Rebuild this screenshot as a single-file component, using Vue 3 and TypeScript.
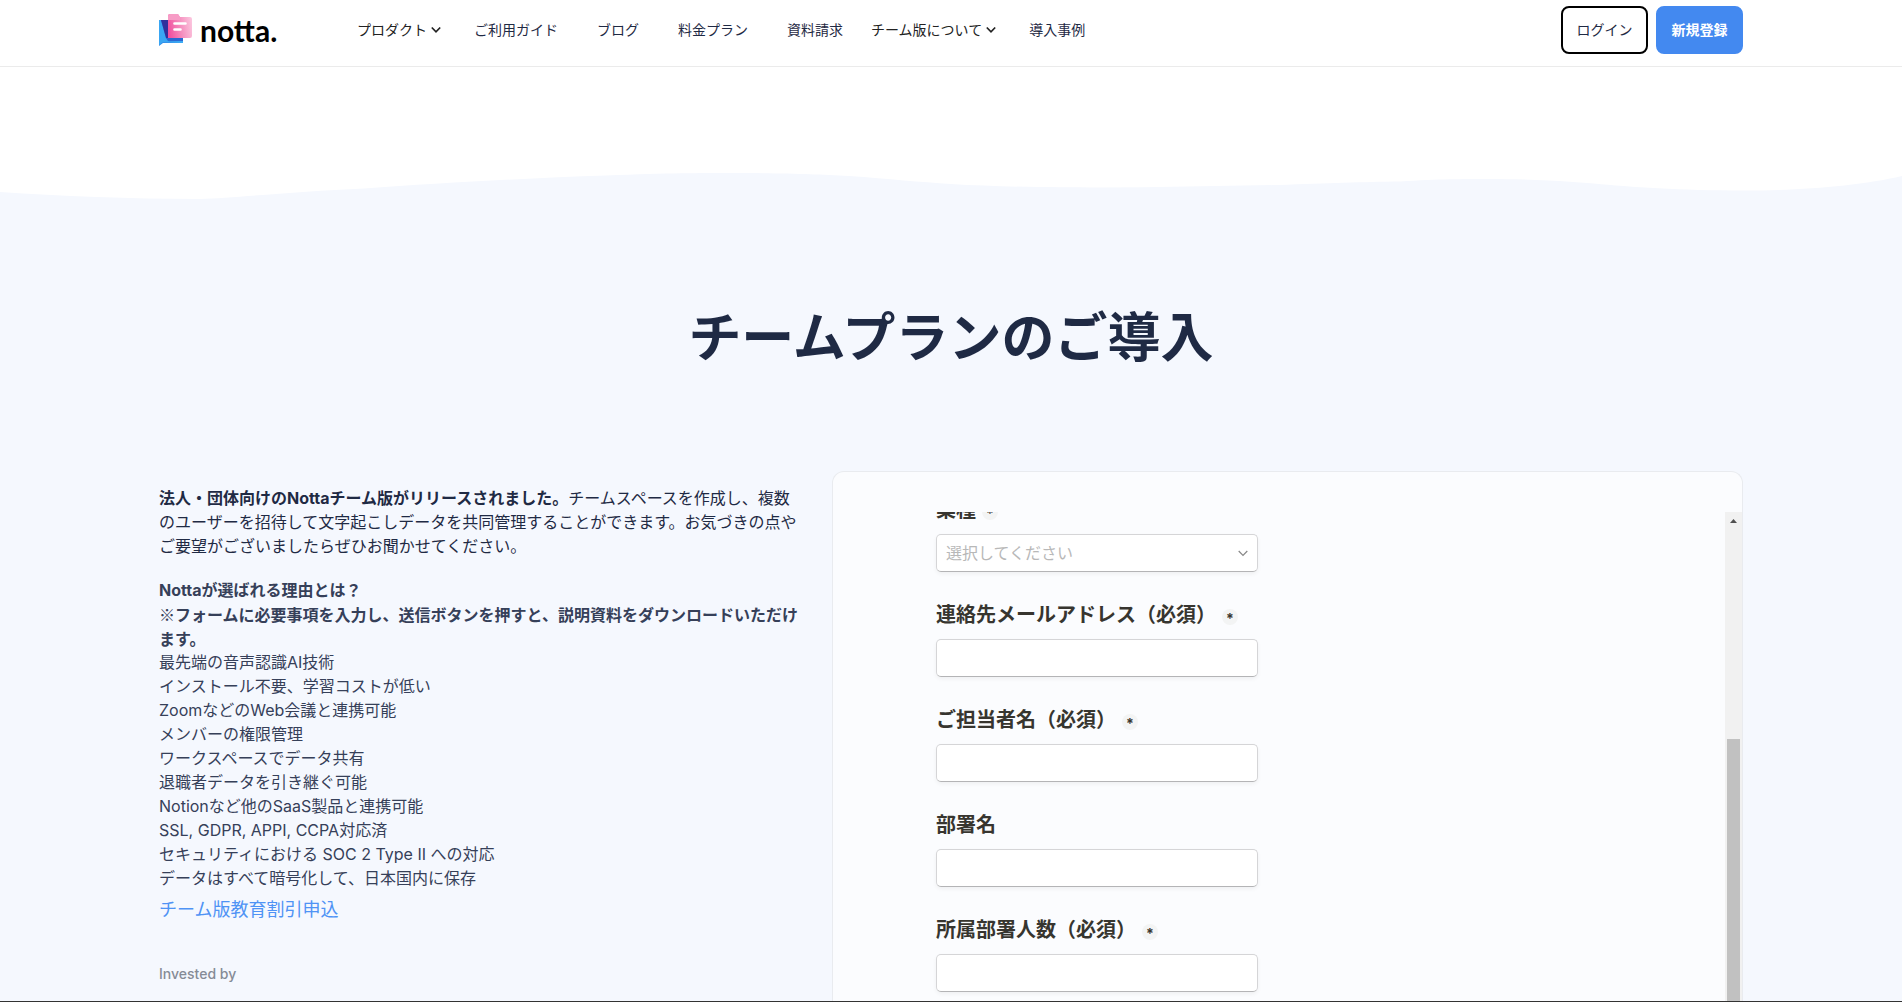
<script setup lang="ts">
import { ref } from 'vue'

interface NavItem {
  label: string
  menu?: boolean
}

interface Field {
  id: string
  label: string
  required: boolean
  kind: 'select' | 'text' | 'email'
}

const navItems: NavItem[] = [
  { label: 'プロダクト', menu: true },
  { label: 'ご利用ガイド' },
  { label: 'ブログ' },
  { label: '料金プラン' },
  { label: '資料請求' },
  { label: 'チーム版について', menu: true },
  { label: '導入事例' },
]

const reasons: string[] = [
  '最先端の音声認識AI技術',
  'インストール不要、学習コストが低い',
  'ZoomなどのWeb会議と連携可能',
  'メンバーの権限管理',
  'ワークスペースでデータ共有',
  '退職者データを引き継ぐ可能',
  'Notionなど他のSaaS製品と連携可能',
  'SSL, GDPR, APPI, CCPA対応済',
  'セキュリティにおける SOC 2 Type II への対応',
  'データはすべて暗号化して、日本国内に保存',
]

const fields: Field[] = [
  { id: 'industry', label: '業種', required: true, kind: 'select' },
  { id: 'email', label: '連絡先メールアドレス（必須）', required: true, kind: 'email' },
  { id: 'contact', label: 'ご担当者名（必須）', required: true, kind: 'text' },
  { id: 'department', label: '部署名', required: false, kind: 'text' },
  { id: 'headcount', label: '所属部署人数（必須）', required: true, kind: 'text' },
]

const values = ref<Record<string, string>>({
  industry: '',
  email: '',
  contact: '',
  department: '',
  headcount: '',
})
</script>

<template>
  <div class="page">
    <header class="header">
      <div class="container header-row">
        <a class="logo" href="#">
          <svg class="logo-mark" viewBox="0 0 33 32" aria-hidden="true">
            <defs>
              <linearGradient id="bubble" x1="0" y1="0" x2="1" y2="1">
                <stop offset="0" stop-color="#2563d8" />
                <stop offset="1" stop-color="#3fb4f7" />
              </linearGradient>
              <linearGradient id="folder" x1="0" y1="0.6" x2="1" y2="0.4">
                <stop offset="0" stop-color="#f0509f" />
                <stop offset="0.5" stop-color="#f58cbd" />
                <stop offset="1" stop-color="#fbc4dd" />
              </linearGradient>
            </defs>
            <path d="M0 6h24v23H4l-4 3z" fill="url(#bubble)" />
            <path d="M0 6h2l5 18 3 4H4l-4 3z" fill="#39a6f3" />
            <path d="M2 6h8v18H7z" fill="#30309c" />
            <path d="M7 24h17v3H9z" fill="#2a67d2" />
            <path d="M9 2q0-2 2-2h8l2 3h10q2 0 2 2v17q0 2-2 2H9z" fill="url(#folder)" />
            <path d="M9 2q0-2 2-2h8l2 3v3H9z" fill="#f79cc6" />
            <path d="M15.500 9.500h11M15.500 15.500h6" stroke="#fff" stroke-width="2.600" stroke-linecap="round" />
          </svg>
          <span class="logo-word">notta.</span>
        </a>

        <nav class="nav">
          <template v-for="item in navItems" :key="item.label">
            <button v-if="item.menu" type="button" class="nav-menu">
              {{ item.label }}
              <svg class="nav-chevron" viewBox="0 0 10 8" aria-hidden="true">
                <path d="M0.800 1.500 5 5.800 9.200 1.500" fill="none" stroke="currentColor" stroke-width="1.700" />
              </svg>
            </button>
            <a v-else class="nav-link" href="#">{{ item.label }}</a>
          </template>
        </nav>

        <div class="actions">
          <button type="button" class="btn btn-outline">ログイン</button>
          <button type="button" class="btn btn-primary">新規登録</button>
        </div>
      </div>
    </header>

    <svg class="wave" viewBox="0 0 1902 32" preserveAspectRatio="none" aria-hidden="true">
      <path
        d="M0 22C60 26 130 29 200 29C235 28 300 21 364 18.500C440 13 530 8 606 5.500C670 3 700 3 728 3C790 3 815 4 849 6C890 9 920 12 951 14C1000 17 1060 17.500 1100 17.500C1160 17.500 1220 16 1278 15C1330 13 1360 12 1400 11.500C1440 9 1460 9 1490 9C1530 9 1560 11 1594 13.500C1630 17 1680 20.500 1745 20.500C1800 20.500 1860 16 1902 6V32H0Z"
        fill="#f5f8fe"
      />
    </svg>

    <main class="main">
      <h1 class="title">チームプランのご導入</h1>
      <div class="container columns">
        <section class="intro">
          <p class="lead">
            <strong>法人・団体向けのNottaチーム版がリリースされました。</strong>チームスペースを作成し、複数のユーザーを招待して文字起こしデータを共同管理することができます。お気づきの点やご要望がございましたらぜひお聞かせてください。
          </p>
          <div class="reasons">
            <h2 class="reasons-title">Nottaが選ばれる理由とは？</h2>
            <p class="reasons-note">※フォームに必要事項を入力し、送信ボタンを押すと、説明資料をダウンロードいただけます。</p>
            <ul class="reasons-list">
              <li v-for="reason in reasons" :key="reason">{{ reason }}</li>
            </ul>
          </div>
          <a class="edu-link" href="#">チーム版教育割引申込</a>
          <p class="invested">Invested by</p>
        </section>

        <section class="card">
          <div class="viewport">
            <form class="form" @submit.prevent>
              <div v-for="field in fields" :key="field.id" class="field">
                <label class="field-label" :for="field.id">
                  {{ field.label }}
                  <span v-if="field.required" class="required">*</span>
                </label>
                <div v-if="field.kind === 'select'" class="select-wrap">
                  <select :id="field.id" v-model="values[field.id]" class="control control-select">
                    <option value="">選択してください</option>
                  </select>
                  <svg class="select-chevron" viewBox="0 0 10 7" aria-hidden="true">
                    <path d="M0.700 1 5 5.500 9.300 1" fill="none" stroke="#888" stroke-width="1.200" />
                  </svg>
                </div>
                <input v-else :id="field.id" v-model="values[field.id]" class="control" :type="field.kind" />
              </div>
            </form>
            <div class="scrollbar" aria-hidden="true">
              <svg class="scroll-arrow" viewBox="0 0 7 4"><path d="M0 4 3.500 0 7 4z" fill="#505050" /></svg>
              <div class="scroll-thumb"></div>
            </div>
          </div>
        </section>
      </div>
    </main>
  </div>
</template>

<style>
body {
  background: #fff;
}
</style>

<style scoped>
.page {
  box-sizing: border-box;
  display: flex;
  flex-direction: column;
  height: 100vh;
  overflow: hidden;
  border-bottom: 1px solid #333;
  color: #1f2a44;
  font-family: Inter, 'Noto Sans CJK JP', sans-serif;
  font-size: 16px;
  line-height: 24px;
}

h1,
h2,
p,
ul {
  margin: 0;
  padding: 0;
}

button,
input,
select {
  font-family: inherit;
}

a {
  color: inherit;
  text-decoration: none;
}

.container {
  box-sizing: border-box;
  width: 100%;
  max-width: 1584px;
  margin: 0 auto;
}

.header {
  flex: none;
  padding-bottom: 6px;
  border-bottom: 1px solid #ebebeb;
}

.header-row {
  display: flex;
  align-items: center;
  height: 60px;
}

.logo {
  display: flex;
  align-items: center;
  gap: 8px;
  width: 203px;
}

.logo-mark {
  width: 33px;
  height: 32px;
}

.logo-word {
  color: #000;
  font-family: Lato, sans-serif;
  font-size: 30px;
  font-weight: 700;
  line-height: 32px;
}

.nav {
  display: flex;
  align-items: center;
  gap: 27px;
  font-size: 14px;
  white-space: nowrap;
}

.nav-menu {
  display: flex;
  align-items: center;
  gap: 4px;
  margin-left: -5px;
  padding: 0;
  border: 0;
  background: none;
  color: #222;
  font-size: 14px;
  line-height: 24px;
}

.nav-link {
  padding: 0 6px;
}

.nav-chevron {
  width: 10px;
  height: 8px;
}

.actions {
  display: flex;
  gap: 8px;
  margin-left: auto;
}

.btn {
  min-width: 87px;
  height: 48px;
  padding: 0 12px;
  border: 2px solid #000;
  border-radius: 8px;
  font-size: 14px;
  line-height: 24px;
}

.btn-outline {
  background: #fff;
  color: #1f2a44;
}

.btn-primary {
  border-color: #4389f0;
  background: #4389f0;
  color: #fff;
  font-weight: 700;
}

.wave {
  display: block;
  flex: none;
  width: 100%;
  height: 32px;
  margin-top: 103px;
}

.main {
  flex: 1;
  display: flex;
  flex-direction: column;
  min-height: 0;
  padding-top: 100px;
  background: #f5f8fe;
}

.title {
  margin-bottom: 105px;
  font-family: 'Noto Sans CJK JP', sans-serif;
  font-size: 53px;
  font-weight: 700;
  line-height: 64px;
  text-align: center;
}

.columns {
  flex: 1;
  display: grid;
  grid-template-columns: 646fr 911fr;
  gap: 27px;
  min-height: 0;
}

.intro {
  padding-top: 15px;
  padding-right: 4px;
}

.reasons {
  margin-top: 20px;
  color: #364059;
}

.reasons-title,
.reasons-note {
  font-size: 16px;
  font-weight: 700;
  line-height: 24px;
}

.reasons-note {
  font-family: 'Noto Sans CJK JP', sans-serif;
}

.reasons-list {
  list-style: none;
}

.edu-link {
  display: inline-block;
  margin-top: 6px;
  color: #4f93f5;
  font-size: 18px;
  line-height: 28px;
}

.invested {
  margin-top: 40px;
  color: #858b96;
  font-size: 14px;
  font-weight: 500;
  line-height: 20px;
}

.card {
  display: flex;
  flex-direction: column;
  min-height: 0;
  padding-top: 40px;
  border: 1px solid #e9ebef;
  border-bottom: 0;
  border-radius: 12px 12px 0 0;
  background: #fbfcfe;
}

.viewport {
  flex: 1;
  display: flex;
  justify-content: space-between;
  min-height: 0;
  overflow: hidden;
}

.form {
  display: flex;
  flex-direction: column;
  gap: 28px;
  width: 322px;
  margin-top: -17px;
  margin-left: 103px;
  color: #37352f;
}

.field-label {
  display: flex;
  align-items: center;
  gap: 6px;
  margin-bottom: 11px;
  font-family: 'Noto Sans CJK JP', sans-serif;
  font-size: 20px;
  font-weight: 700;
  line-height: 28px;
  white-space: nowrap;
}

.required {
  width: 16px;
  height: 16px;
  margin-top: 6px;
  border-radius: 50%;
  background: #f3f4f4;
  font-family: Inter, sans-serif;
  font-size: 14px;
  line-height: 20px;
  text-align: center;
}

.control {
  display: block;
  box-sizing: border-box;
  width: 100%;
  height: 38px;
  padding: 0 9px 1px;
  border: 1px solid #d5d5d7;
  border-bottom-color: #b4b4b6;
  border-radius: 5px;
  outline: 0;
  background: #fff;
  box-shadow: 0 2px 4px rgba(0, 0, 0, 0.05);
  color: #37352f;
  font-size: 16px;
}

.select-wrap {
  position: relative;
}

.control-select {
  appearance: none;
  color: #b8b8b8;
}

.select-chevron {
  position: absolute;
  top: 16px;
  right: 10px;
  width: 10px;
  height: 7px;
  pointer-events: none;
}

.scrollbar {
  display: flex;
  flex-direction: column;
  align-items: center;
  width: 17px;
  background: #f1f1f1;
}

.scroll-arrow {
  flex: none;
  width: 7px;
  height: 4px;
  margin: 7px 0 216px;
}

.scroll-thumb {
  flex: 1;
  width: 13px;
  background: #c1c1c1;
}
</style>
